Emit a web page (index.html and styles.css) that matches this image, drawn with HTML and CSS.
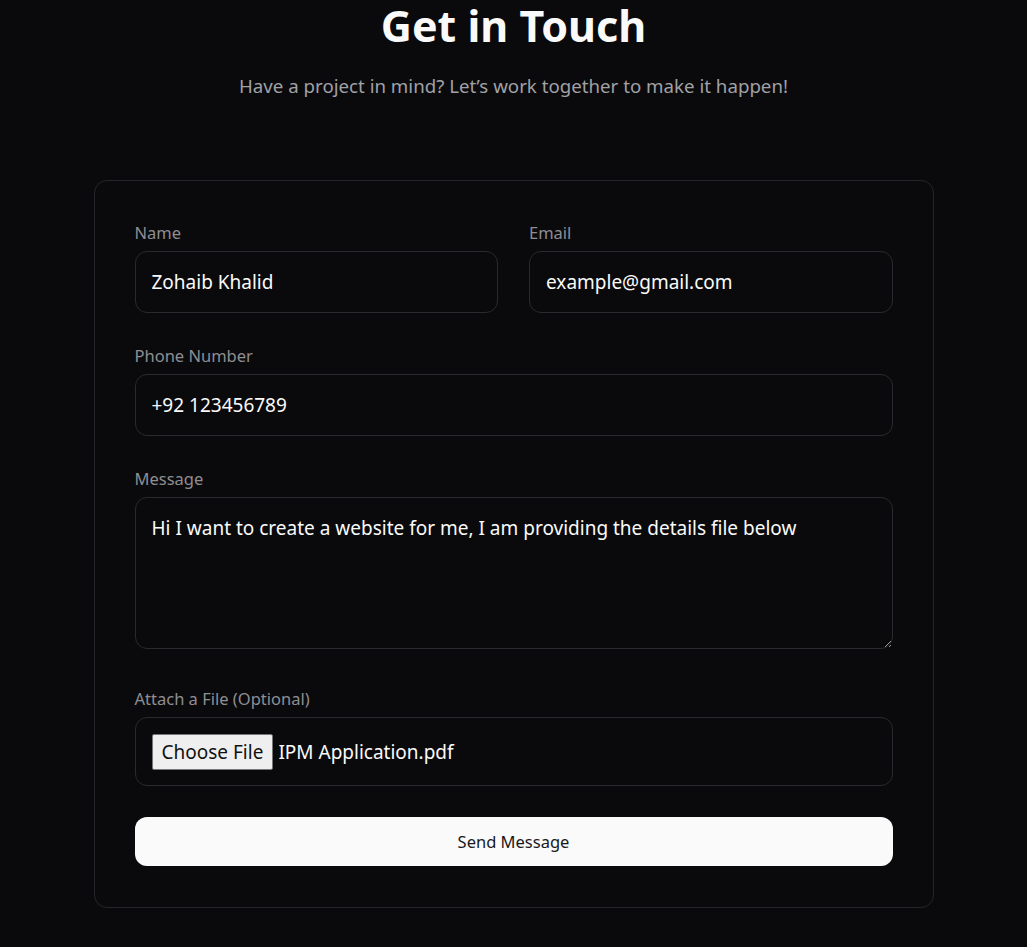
FILE: index.html
```html
<!DOCTYPE html>
<html lang="en">
<head>
<meta charset="utf-8">
<title>Get in Touch</title>
<link rel="stylesheet" href="styles.css">
</head>
<body>
<main class="contact">
  <header class="intro">
    <h1 class="title">Get in Touch</h1>
    <p class="subtitle">Have a project in mind? Let’s work together to make it happen!</p>
  </header>
  <form class="card">
    <div class="row">
      <div class="field">
        <label class="label" for="name">Name</label>
        <input class="input" id="name" type="text" value="Zohaib Khalid">
      </div>
      <div class="field">
        <label class="label" for="email">Email</label>
        <input class="input" id="email" type="email" value="example@gmail.com">
      </div>
    </div>
    <div class="field">
      <label class="label" for="phone">Phone Number</label>
      <input class="input" id="phone" type="tel" value="+92 123456789">
    </div>
    <div class="field field-message">
      <label class="label" for="message">Message</label>
      <textarea class="input textarea" id="message">Hi I want to create a website for me, I am providing the details file below</textarea>
    </div>
    <div class="field">
      <span class="label">Attach a File (Optional)</span>
      <div class="file">
        <span class="file-btn">Choose File</span>
        <span class="file-name">IPM Application.pdf</span>
      </div>
    </div>
    <button class="send" type="button">Send Message</button>
  </form>
</main>
</body>
</html>
```
FILE: styles.css
```css
* { box-sizing: border-box; }
html, body {
  margin: 0;
  background: #0a0a0c;
  color: #fafafa;
  font-family: "Noto Sans", "Open Sans", sans-serif;
}
.contact {
  display: flex;
  flex-direction: column;
  align-items: center;
}
.intro {
  text-align: center;
}
.title {
  margin: 0;
  font-size: 43px;
  line-height: 52px;
  font-weight: 700;
  color: #fafafa;
}
.subtitle {
  margin: 22px 0 0;
  font-size: 18.7px;
  line-height: 24px;
  color: #a1a1a6;
}
.card {
  margin-top: 82px;
  width: 840px;
  border: 1px solid #26262a;
  border-radius: 13px;
  padding: 42px 40px 41px;
  display: flex;
  flex-direction: column;
  gap: 33px;
}
.row {
  display: grid;
  grid-template-columns: 1fr 1fr;
  gap: 31px;
}
.field {
  display: flex;
  flex-direction: column;
}
.field-message {
  margin-bottom: 7px;
}
.label {
  font-size: 16.5px;
  line-height: 20px;
  color: #8e8e93;
  margin-bottom: 8px;
}
.input {
  height: 62px;
  background: #0a0a0c;
  border: 1px solid #2a2a2e;
  border-radius: 12px;
  padding: 0 16px;
  color: #fafafa;
  font-family: inherit;
  font-size: 19px;
  outline: none;
}
.textarea {
  display: block;
  height: 152px;
  padding: 17px 16px;
  resize: vertical;
  line-height: 26px;
  color-scheme: dark;
}
.file {
  height: 69px;
  border: 1px solid #2a2a2e;
  border-radius: 12px;
  display: flex;
  align-items: center;
  padding: 0 16px;
  gap: 5px;
  font-size: 19px;
}
.file-btn {
  background: #efefef;
  color: #111;
  border: 1px solid #767676;
  border-radius: 2px;
  padding: 4px 9px;
  line-height: 26px;
  font-size: 19px;
}
.file-name {
  color: #fafafa;
}
.send {
  margin-top: -2px;
  height: 49px;
  border: none;
  border-radius: 12px;
  background: #fafafa;
  color: #18181b;
  font-family: inherit;
  font-size: 16.5px;
}
```
